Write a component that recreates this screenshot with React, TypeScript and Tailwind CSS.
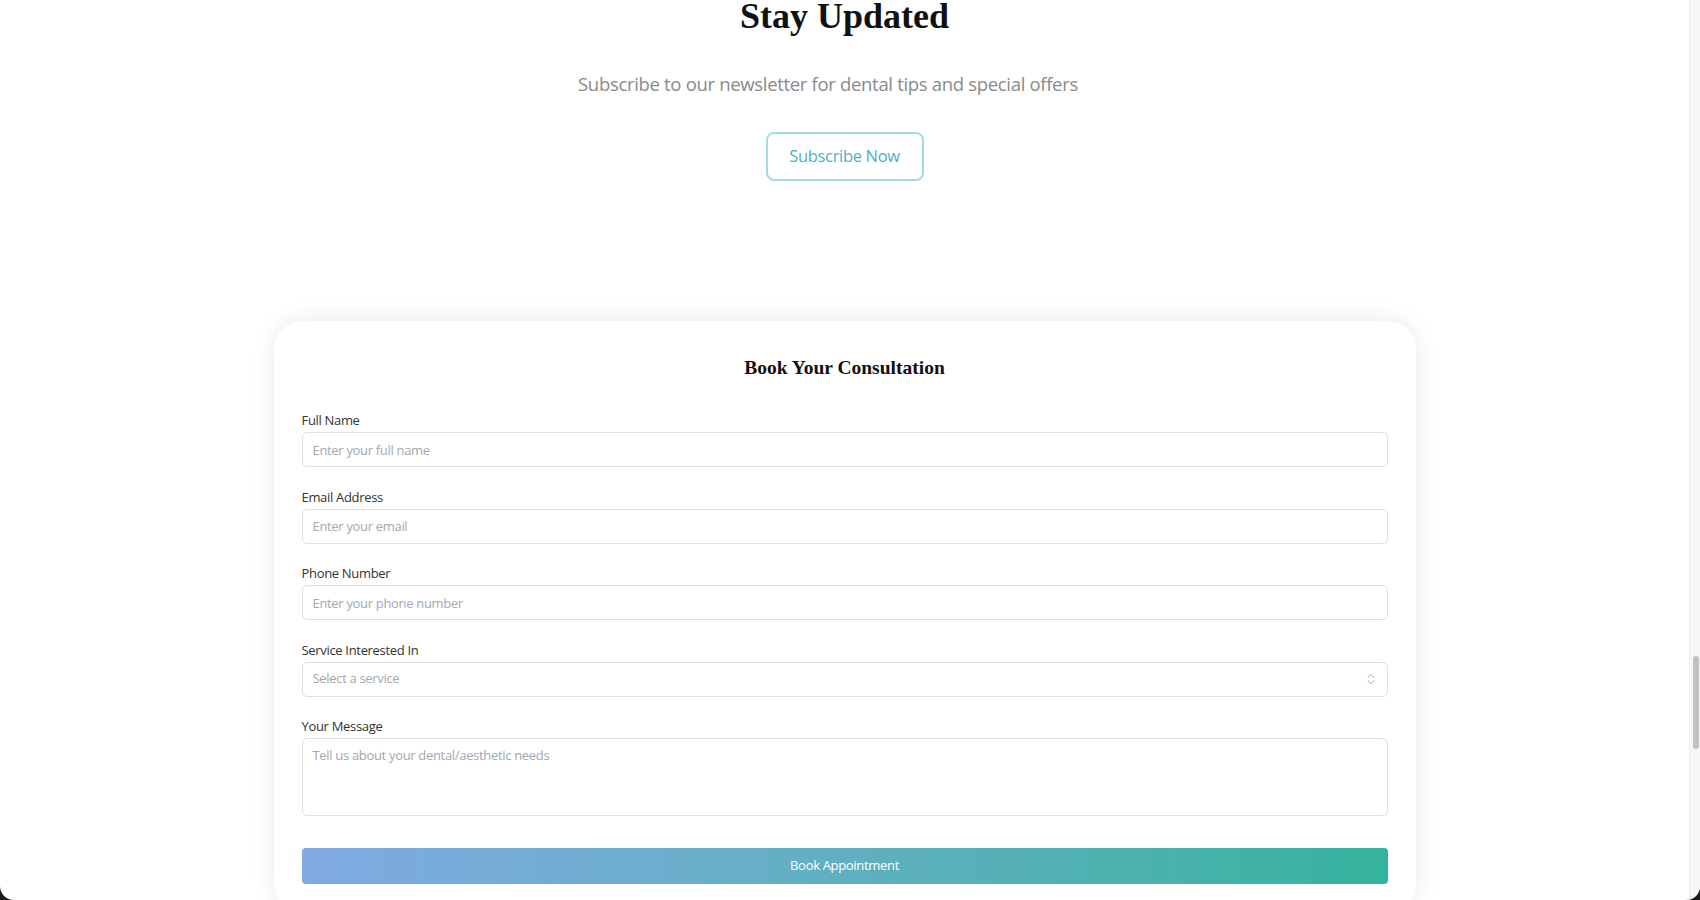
import React from 'react';
import { ChevronsUpDown } from 'lucide-react';

const fields = [
  { label: 'Full Name', placeholder: 'Enter your full name', type: 'text' },
  { label: 'Email Address', placeholder: 'Enter your email', type: 'email' },
  { label: 'Phone Number', placeholder: 'Enter your phone number', type: 'tel' },
];

export default function App() {
  return (
    <div className="h-[900px] overflow-hidden bg-[#1b1b1b]">
      <div className="flex h-full overflow-hidden rounded-b-[14px] bg-white font-['Open_Sans',sans-serif] tracking-[-0.02em]">
        <main className="flex-1 overflow-hidden">
          {/* Newsletter */}
          <section className="flex flex-col items-center">
            <h2 className="font-['Liberation_Serif',serif] text-[36px] leading-[32px] font-bold tracking-normal text-[#111]">
              Stay Updated
            </h2>
            <p className="mt-[38px] mr-[33px] text-[18.5px] leading-[28px] text-[#8a8a8a]">
              Subscribe to our newsletter for dental tips and special offers
            </p>
            <button
              type="button"
              className="mt-[34px] h-[49px] w-[158px] rounded-lg border-2 border-[#a6dae3] text-[16.5px] text-[#4fb0c3]"
            >
              Subscribe Now
            </button>
          </section>

          {/* Booking form */}
          <div className="mx-auto mt-[140px] w-[1142px] rounded-[28px] bg-white px-[28px] pt-[31px] pb-[28px] shadow-[0_0_24px_rgba(0,0,0,0.09)]">
            <h3 className="text-center font-['Liberation_Serif',serif] text-[19.5px] leading-[32px] font-bold tracking-normal text-[#111]">
              Book Your Consultation
            </h3>
            <form className="mt-[26px] flex flex-col gap-[19.5px]" onSubmit={(e) => e.preventDefault()}>
              {fields.map((f) => (
                <div key={f.label}>
                  <label className="mb-[2px] block text-[13px] leading-[20px] text-[#333]">{f.label}</label>
                  <input
                    type={f.type}
                    placeholder={f.placeholder}
                    className="block h-[35px] w-full rounded-[5px] border border-[#dcdfe4] px-[10px] text-[13px] text-[#333] placeholder:text-[#a3a8ae] outline-none"
                  />
                </div>
              ))}
              <div>
                <label className="mb-[2px] block text-[13px] leading-[20px] text-[#333]">Service Interested In</label>
                <div className="relative">
                  <select
                    defaultValue=""
                    className="block h-[35px] w-full appearance-none rounded-[5px] border border-[#dcdfe4] bg-white px-[10px] text-[13px] text-[#a3a8ae] outline-none"
                  >
                    <option value="">Select a service</option>
                    <option>Dental Cleaning</option>
                    <option>Teeth Whitening</option>
                    <option>Aesthetic Consultation</option>
                  </select>
                  <ChevronsUpDown className="pointer-events-none absolute top-[10px] right-[10px] h-[14px] w-[14px] text-[#8e949b]" strokeWidth={1.5} />
                </div>
              </div>
              <div>
                <label className="mb-[2px] block text-[13px] leading-[20px] text-[#333]">Your Message</label>
                <textarea
                  placeholder="Tell us about your dental/aesthetic needs"
                  className="block h-[78px] w-full resize-none rounded-[5px] border border-[#dcdfe4] px-[10px] py-[7px] text-[13px] text-[#333] placeholder:text-[#a3a8ae] outline-none"
                />
              </div>
              <button
                type="submit"
                className="mt-[12px] h-[36px] w-full rounded-[4px] bg-gradient-to-r from-[#80aae3] to-[#33b39d] text-[13px] text-white"
              >
                Book Appointment
              </button>
            </form>
          </div>
        </main>

        {/* scrollbar */}
        <aside className="w-[11px] shrink-0 border-l border-[#ededed] bg-[#f7f7f7]">
          <div className="mt-[656px] ml-[3px] h-[93px] w-[6px] rounded-full bg-[#c2c2c2]" />
        </aside>
      </div>
    </div>
  );
}
